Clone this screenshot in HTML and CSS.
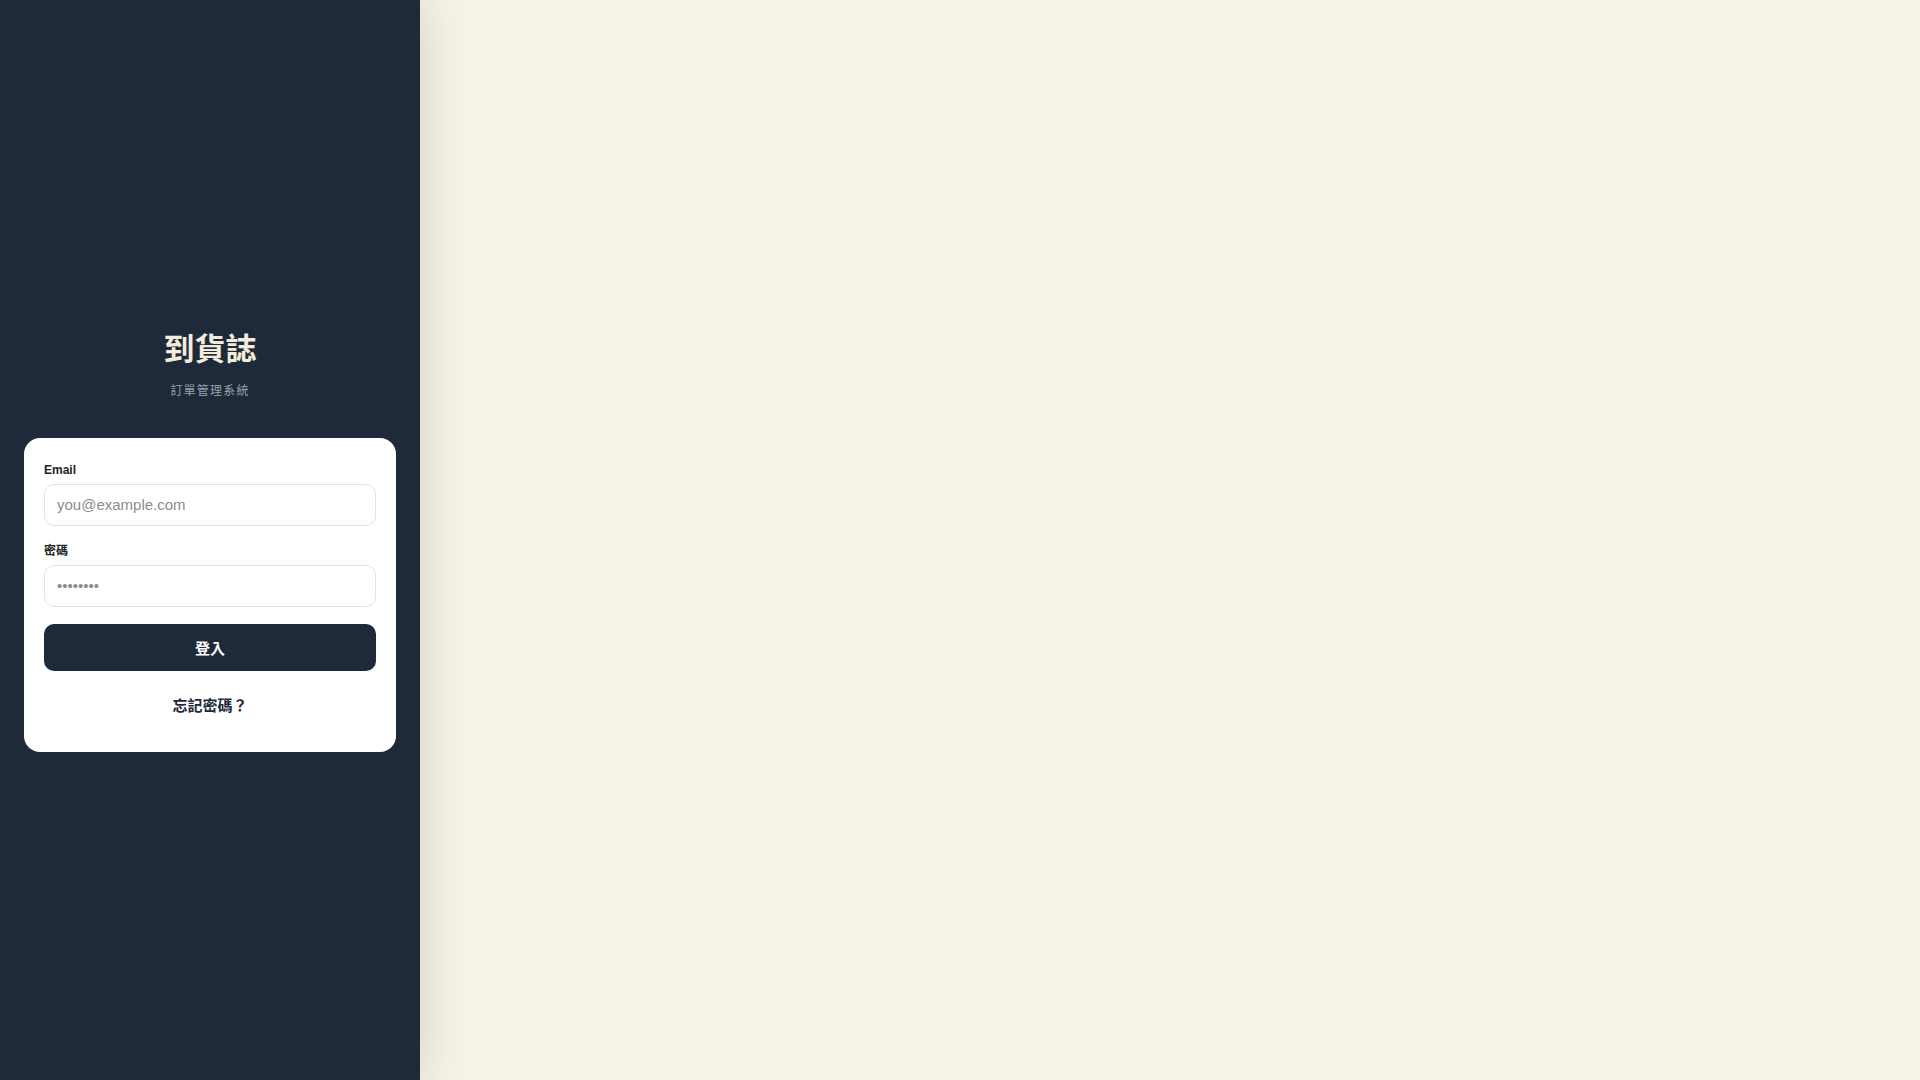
FILE: index.html
```html
<!DOCTYPE html>
<html lang="zh-Hant">
<head>
<meta charset="utf-8">
<title>到貨誌 - 登入</title>
<link rel="stylesheet" href="styles.css">
</head>
<body>
<div class="layout">
  <aside class="sidebar">
    <div class="brand">
      <h1 class="brand-title">到貨誌</h1>
      <p class="brand-sub">訂單管理系統</p>
    </div>
    <form class="card">
      <div class="field">
        <label class="label" for="email">Email</label>
        <input class="input" id="email" type="email" placeholder="you@example.com">
      </div>
      <div class="field">
        <label class="label" for="pw">密碼</label>
        <input class="input" id="pw" type="password" placeholder="••••••••">
      </div>
      <button class="btn" type="button">登入</button>
      <div class="forgot"><a class="forgot-link" href="#">忘記密碼？</a></div>
    </form>
  </aside>
  <main class="main"></main>
</div>
</body>
</html>
```

FILE: styles.css
```css
* { box-sizing: border-box; }
html, body { margin: 0; padding: 0; height: 100%; }
body {
  font-family: "Liberation Sans", "Noto Sans CJK TC", sans-serif;
  background: #f7f2e8;
}
.layout {
  display: flex;
  height: 100vh;
}
.sidebar {
  width: 420px;
  flex: 0 0 420px;
  background: #1e2a3a;
  display: flex;
  flex-direction: column;
  justify-content: center;
  padding: 0 24px;
  position: relative;
  z-index: 2;
  box-shadow: 6px 0 40px rgba(60, 50, 30, 0.14);
}
.brand {
  text-align: center;
  margin-bottom: 39px;
}
.brand-title {
  margin: 0;
  font-family: "Noto Sans CJK TC", sans-serif;
  font-weight: 700;
  font-size: 31px;
  line-height: 36px;
  color: #f3ecdc;
}
.brand-sub {
  margin: 16px 0 0;
  font-family: "Noto Sans CJK TC", sans-serif;
  font-size: 12px;
  line-height: 18px;
  letter-spacing: 1.2px;
  color: #97a1ad;
}
.card {
  background: #ffffff;
  border-radius: 16px;
  padding: 23px 20px 35px;
  display: flex;
  flex-direction: column;
}
.field {
  display: flex;
  flex-direction: column;
  margin-bottom: 16px;
}
.field + .field { margin-bottom: 17px; }
.label {
  font-size: 12px;
  line-height: 18px;
  font-weight: 700;
  color: #222222;
  margin-bottom: 5px;
}
.input {
  height: 42px;
  width: 100%;
  border: 1px solid #e3e3e3;
  border-radius: 10px;
  padding: 0 12px;
  font-family: "Liberation Sans", "Noto Sans CJK TC", sans-serif;
  font-size: 15px;
  color: #222;
  background: #fff;
  outline: none;
}
.input::placeholder { color: #8c8c8c; }
.btn {
  height: 47px;
  border: none;
  border-radius: 10px;
  background: #1e2a3a;
  color: #ffffff;
  font-family: "Liberation Sans", "Noto Sans CJK TC", sans-serif;
  font-size: 15px;
  font-weight: 700;
  cursor: pointer;
}
.forgot {
  margin-top: 24px;
  text-align: center;
  line-height: 22px;
}
.forgot-link {
  font-size: 15px;
  font-weight: 700;
  color: #1e2a3a;
  text-decoration: none;
}
.main {
  flex: 1;
  background: #f7f2e8;
}
```
